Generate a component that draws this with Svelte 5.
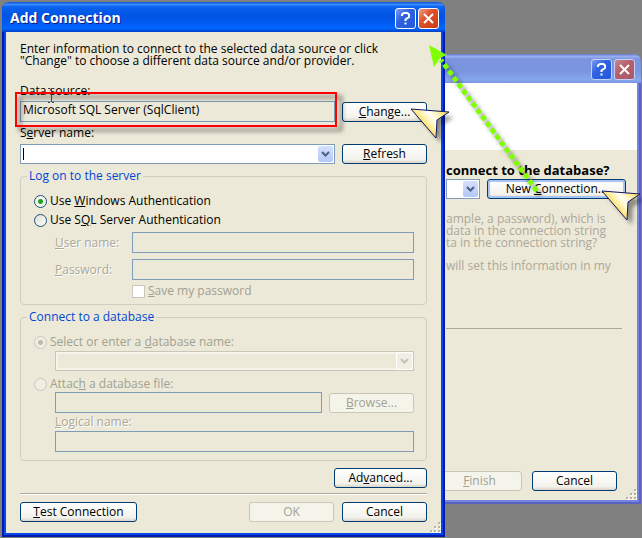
<script lang="ts">
    let dataSource = $state("Microsoft SQL Server (SqlClient)");
    let auth = $state("windows");
    let target = $state("name");
</script>

{#snippet grip()}
    <svg class="grip" width="11" height="11" aria-hidden="true">
        {#each [[8, 0], [4, 4], [8, 4], [0, 8], [4, 8], [8, 8]] as [x, y]}
            <rect x={x + 1} y={y + 1} width="2" height="2" fill="#fff" />
            <rect {x} {y} width="2" height="2" fill="#b8b4a3" />
        {/each}
    </svg>
{/snippet}

{#snippet captionButtons()}
    <button class="caption help" aria-label="Help">
        <svg width="19" height="19">
            <path d="M6 7V5.500L8 4H11.500L13 5.500V8L9.500 10.500V12M9.500 13.500V15.500" />
        </svg>
    </button>
    <button class="caption close" aria-label="Close">
        <svg width="19" height="19"><path d="M5 5L14 14M14 5L5 14" /></svg>
    </button>
{/snippet}

{#snippet pointer(x, y)}
    <g transform="translate({x} {y})">
        <path class="shade" d="M0 0L38 3L26 11L25 29Z" transform="translate(5 5)" />
        <path class="arrow" d="M0 0L38 3L26 11L25 29Z" />
    </g>
{/snippet}

<main class="desktop">
    <section class="window wizard">
        <header>{@render captionButtons()}</header>
        <div class="pane">
            <div class="banner"></div>
            <div class="page">
                <label class="question" for="conn">connect to the database?</label>
                <div class="row">
                    <span class="combo">
                        <select id="conn"><option></option></select>
                        <svg class="drop" width="15" height="16"><path d="M4 6L7.500 9.500L11 6" /></svg>
                    </span>
                    <button class="btn focused new">New <u>C</u>onnection...</button>
                </div>
                <p class="hint">ample, a password), which is<br />data in the connection string<br />ta in the connection string?</p>
                <p class="hint">will set this information in my</p>
                <hr />
                <div class="row actions">
                    <button class="btn" disabled><u>F</u>inish</button>
                    <button class="btn">Cancel</button>
                </div>
            </div>
        </div>
        {@render grip()}
    </section>

    <section class="window dialog">
        <header>
            <h1>Add Connection</h1>
            {@render captionButtons()}
        </header>
        <form class="pane body" onsubmit={(e) => e.preventDefault()}>
            <p class="intro">Enter information to connect to the selected data source or click<br />"Change" to choose a different data source and/or provider.</p>

            <label for="source">Data source:</label>
            <div class="row source">
                <input id="source" type="text" readonly bind:value={dataSource} />
                <button type="button" class="btn"><u>C</u>hange...</button>
            </div>

            <label for="server">S<u>e</u>rver name:</label>
            <div class="row server">
                <span class="combo">
                    <select id="server"><option></option></select>
                    <i class="caret"></i>
                    <svg class="drop" width="15" height="16"><path d="M4 6L7.500 9.500L11 6" /></svg>
                </span>
                <button type="button" class="btn"><u>R</u>efresh</button>
            </div>

            <fieldset class="logon">
                <legend>Log on to the server</legend>
                <label class="option">
                    <input type="radio" name="auth" value="windows" bind:group={auth} />
                    <span>Use <u>W</u>indows Authentication</span>
                </label>
                <label class="option">
                    <input type="radio" name="auth" value="sql" bind:group={auth} />
                    <span>Use S<u>Q</u>L Server Authentication</span>
                </label>
                <div class="login">
                    <label class="etched" for="user"><u>U</u>ser name:</label>
                    <input id="user" type="text" disabled />
                    <label class="etched" for="password"><u>P</u>assword:</label>
                    <input id="password" type="password" disabled />
                    <label class="option off save">
                        <input type="checkbox" disabled />
                        <span><u>S</u>ave my password</span>
                    </label>
                </div>
            </fieldset>

            <fieldset class="database">
                <legend>Connect to a database</legend>
                <label class="option off">
                    <input type="radio" name="target" value="name" bind:group={target} disabled />
                    <span>Select or enter a <u>d</u>atabase name:</span>
                </label>
                <div class="indent">
                    <span class="combo off">
                        <select aria-label="Database name" disabled><option></option></select>
                        <svg class="drop" width="15" height="16"><path d="M4 6L7.500 9.500L11 6" /></svg>
                    </span>
                </div>
                <label class="option off">
                    <input type="radio" name="target" value="file" bind:group={target} disabled />
                    <span>Attac<u>h</u> a database file:</span>
                </label>
                <div class="indent">
                    <div class="row">
                        <input type="text" aria-label="Database file" disabled />
                        <button type="button" class="btn" disabled><u>B</u>rowse...</button>
                    </div>
                    <label class="etched" for="logical"><u>L</u>ogical name:</label>
                    <input id="logical" type="text" disabled />
                </div>
            </fieldset>

            <div class="row end">
                <button type="button" class="btn wide">Ad<u>v</u>anced...</button>
            </div>
            <hr />
            <div class="row actions">
                <button type="button" class="btn test"><u>T</u>est Connection</button>
                <button class="btn" disabled>OK</button>
                <button type="button" class="btn">Cancel</button>
            </div>
        </form>
        {@render grip()}
    </section>

    <svg class="notes" width="642" height="538" aria-hidden="true">
        <defs>
            <linearGradient id="gold" x1="0" y1="0.600" x2="0.900" y2="0">
                <stop offset="0.150" stop-color="#ffc820" />
                <stop offset="0.450" stop-color="#fff4b8" />
                <stop offset="0.600" stop-color="#fffef8" />
                <stop offset="1" stop-color="#ffdc50" />
            </linearGradient>
            <filter id="soft" x="-30%" y="-30%" width="160%" height="160%">
                <feGaussianBlur stdDeviation="2" />
            </filter>
        </defs>
        <rect class="shade frame" x="20" y="97" width="321" height="33" />
        <rect class="red" x="16" y="93" width="320" height="33" />
        <!-- text cursor resting over the label -->
        <path class="ibeam" d="M48 88.500H50M52 88.500H54M51.500 89V102M48 102.500H50M52 102.500H54" />
        <path class="shade trail" d="M540 195L445 64" />
        <path class="trail" d="M537 191L441 60" />
        <path class="head" d="M429 45L447 55L440 58L434 67Z" />
        {@render pointer(411, 109)}
        {@render pointer(602, 191)}
    </svg>
</main>

<style>
    :global(body) {
        margin: 0;
    }

    .desktop {
        position: relative;
        min-height: 100vh;
        overflow: hidden;
        background: #808080;
        color: #000;
        font: 12px/14px "Open Sans", "Liberation Sans", sans-serif;
    }

    .desktop * {
        box-sizing: border-box;
    }

    .window {
        position: absolute;
        border: 2px solid #0019b0;
        border-top: 0;
        border-radius: 7px 7px 0 0;
        background: #ece9d8;
    }

    .pane {
        border: 2px solid #0648e6;
        border-top: 0;
    }

    .dialog {
        top: 2px;
        left: 2px;
        right: 197px;
    }

    .wizard {
        top: 54px;
        left: calc(100% - 202px);
        right: 1px;
        border-color: #5a62c4;
    }

    .wizard .pane {
        border-color: #7484dc;
    }

    header {
        display: flex;
        align-items: center;
        justify-content: flex-end;
        gap: 2px;
        height: 30px;
        margin: 0 -2px;
        padding: 2px 6px 0 8px;
        border-radius: 7px 7px 0 0;
        background: linear-gradient(#0a4fd0, #3b8cff 8%, #0a62f0 16%, #0054e3 45%, #0058ee 65%, #0066ff 88%, #0040c8);
    }

    .wizard header {
        height: 29px;
        background: linear-gradient(#6478d0, #98b0f0 8%, #7b94e0 18%, #7a96df 60%, #86a8ec 90%, #7a92e0);
    }

    h1 {
        flex: 1;
        margin: 0;
        color: #fff;
        font-size: 14px;
        line-height: 20px;
        text-shadow: 1px 1px #0a2080;
    }

    .caption {
        width: 21px;
        height: 21px;
        padding: 0;
        border: 1px solid #fff;
        border-radius: 3px;
        background: linear-gradient(135deg, #7c9cf0, #2f62e0 40%, #2458dc);
    }

    .caption svg {
        display: block;
    }

    .caption path {
        fill: none;
        stroke: #fff;
        stroke-width: 2;
    }

    .close {
        background: linear-gradient(135deg, #f0a088, #e0502c 40%, #c83c14);
    }

    .wizard .caption {
        border-color: #c4d0f4;
    }

    .wizard .close {
        background: linear-gradient(135deg, #c88898, #b8606c 40%, #a85868);
    }

    .body {
        display: flex;
        flex-direction: column;
        padding: 11px 14px;
    }

    p {
        margin: 0;
        line-height: 12px;
        white-space: nowrap;
    }

    .intro {
        margin-bottom: 17px;
    }

    label {
        display: block;
    }

    .row {
        display: flex;
        align-items: center;
        gap: 7px;
    }

    .source {
        margin: 3px 0 4px;
    }

    .server {
        margin: 4px 0 5px;
    }

    input[type="text"],
    input[type="password"] {
        display: block;
        flex: 1;
        width: 100%;
        min-width: 0;
        height: 21px;
        margin: 0;
        padding: 0 2px 4px;
        border: 1px solid #7f9db9;
        border-radius: 0;
        outline: 0;
        background: #ece9d8;
        color: #000;
        font: inherit;
    }

    .combo {
        display: block;
        position: relative;
        flex: 1;
        height: 20px;
    }

    select {
        display: block;
        width: 100%;
        height: 20px;
        border: 1px solid #7f9db9;
        border-radius: 0;
        appearance: none;
        background: #fff;
    }

    .drop {
        position: absolute;
        top: 2px;
        right: 2px;
        border-radius: 2px;
        background: linear-gradient(#d4e0fe, #b4c8f6);
        pointer-events: none;
    }

    .drop path {
        fill: none;
        stroke: #4d6185;
        stroke-width: 2;
    }

    .caret {
        position: absolute;
        top: 4px;
        left: 3px;
        width: 1px;
        height: 12px;
        background: #000;
    }

    .combo.off select {
        border-color: #c9c7ba;
        background: #ece9d8;
        box-shadow: inset 0 0 0 2px #f5f4ea;
        opacity: 1;
    }

    .combo.off .drop {
        background: #f0efe4;
        box-shadow: 0 0 0 1px #fff;
    }

    .combo.off .drop path {
        stroke: #c4c2b4;
    }

    .btn {
        flex-shrink: 0;
        width: 85px;
        height: 20px;
        padding: 0;
        border: 1px solid #003c74;
        border-radius: 3px;
        background: linear-gradient(#fff, #f3f2ec 80%, #d9d4c8);
        color: #000;
        font: inherit;
        white-space: nowrap;
    }

    .btn:disabled {
        border-color: #c9c7ba;
        background: #f5f4ea;
        color: #a1a192;
    }

    .btn.wide {
        width: 93px;
    }

    .btn.focused {
        box-shadow: inset 0 0 0 2px #a8c4f0;
    }

    fieldset {
        min-width: 0;
        margin: 0 0 5px;
        padding: 11px 12px 6px 13px;
        border: 1px solid #cfcfbd;
        border-radius: 4px;
    }

    legend {
        margin-left: -7px;
        padding: 0 2px;
        color: #0046d5;
    }

    .option {
        display: flex;
        align-items: center;
        gap: 3px;
        height: 14px;
        margin-bottom: 5px;
    }

    .off {
        color: #a1a192;
    }

    .etched {
        color: #aca899;
        text-shadow: 1px 1px #fff;
    }

    input[type="radio"],
    input[type="checkbox"] {
        width: 13px;
        height: 13px;
        margin: 0;
        border: 1px solid #21517a;
        appearance: none;
        background: linear-gradient(135deg, #dcdcd4, #fff);
    }

    input[type="radio"] {
        border-radius: 50%;
    }

    input[type="radio"]:checked {
        background: radial-gradient(circle, #21a121 0 2px, #f4f4f0 3px);
    }

    input[type="radio"]:disabled {
        border-color: #cac8bb;
        background: #f0eee2;
    }

    input[type="radio"]:checked:disabled {
        background: radial-gradient(circle, #bcbaac 0 2px, #f0eee2 3px);
    }

    input[type="checkbox"] {
        border-color: #cac8bb;
        background: #fff;
    }

    .login {
        display: grid;
        grid-template-columns: 77px 1fr;
        row-gap: 6px;
        align-items: center;
        padding-left: 21px;
    }

    .login .save {
        grid-column: 2;
        margin: -2px 0 0;
    }

    .database {
        margin-bottom: 7px;
        padding-bottom: 8px;
    }

    .database .option {
        margin-bottom: 2px;
    }

    .indent {
        padding-left: 21px;
    }

    .indent + .option {
        margin-top: 6px;
        margin-bottom: 1px;
    }

    .indent .etched {
        margin: 2px 0;
    }

    .end {
        justify-content: flex-end;
    }

    hr {
        width: 100%;
        margin: 5px 0 7px;
        border: 0;
        border-top: 1px solid #aca899;
        border-bottom: 1px solid #fff;
    }

    .actions {
        justify-content: flex-end;
        gap: 8px;
    }

    .test {
        width: 117px;
        margin-right: auto;
    }

    .grip {
        position: absolute;
        right: 2px;
        bottom: 2px;
    }

    .banner {
        height: 67px;
        background: #fff;
    }

    .page {
        padding: 13px 15px 9px 2px;
    }

    .question {
        margin-bottom: 2px;
        font-size: 13px;
        font-weight: bold;
        white-space: nowrap;
    }

    .page .row {
        margin-right: -4px;
    }

    .new {
        width: 139px;
    }

    .hint {
        margin: 14px 0 11px;
        color: #aca899;
    }

    .hint + .hint {
        margin: 0;
    }

    .page hr {
        margin: 56px 0 142px;
        border-bottom: 0;
    }

    .page .actions {
        gap: 10px;
        margin-right: 5px;
    }

    .notes {
        position: absolute;
        top: 0;
        left: 0;
        pointer-events: none;
    }

    .red {
        fill: none;
        stroke: #f00;
        stroke-width: 2;
    }

    .shade {
        fill: #000;
        opacity: 0.4;
        filter: url(#soft);
    }

    .frame {
        fill: none;
        stroke: #000;
        stroke-width: 3;
    }

    .arrow {
        fill: url(#gold);
        stroke: #101860;
    }

    .ibeam {
        stroke: #404058;
    }

    .trail {
        fill: none;
        stroke: #80ff00;
        stroke-width: 5;
        stroke-dasharray: 5 3;
    }

    .shade.trail {
        fill: none;
        stroke: #000;
    }

    .head {
        fill: #80ff00;
    }
</style>
